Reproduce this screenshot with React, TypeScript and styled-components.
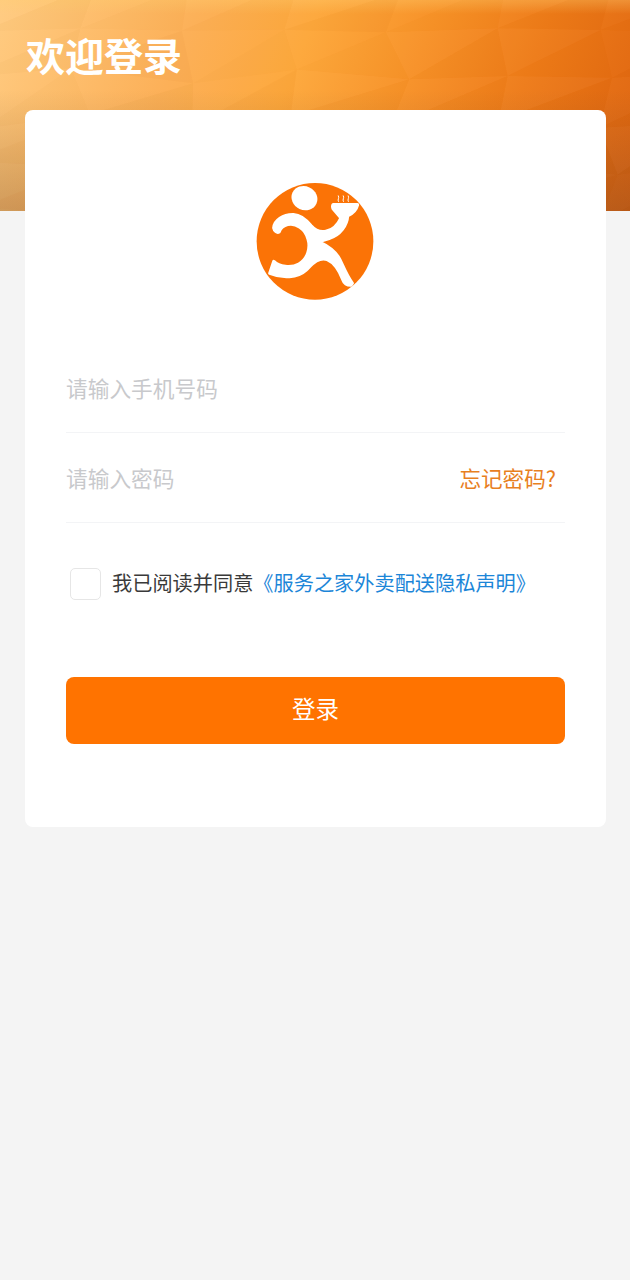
import React from 'react'
import styled, { createGlobalStyle } from 'styled-components'

const GlobalStyle = createGlobalStyle`
  html, body {
    margin: 0;
    padding: 0;
    background: #f4f4f4;
    font-family: "Noto Sans CJK SC", "Noto Sans", sans-serif;
  }
  * {
    box-sizing: border-box;
  }
`

const Page = styled.div`
  width: 630px;
  min-height: 1280px;
  background: #f4f4f4;
`

const Header = styled.header`
  position: relative;
  height: 211px;
  padding: 28px 26px 0;
  overflow: hidden;
  background:
    linear-gradient(180deg, rgba(255, 205, 110, 0.35) 0, rgba(255, 200, 110, 0) 14px),
    linear-gradient(180deg, rgba(130, 80, 40, 0) 90px, rgba(110, 70, 40, 0.32) 211px),
    linear-gradient(112deg, #ffcb80 0%, #fcb057 28%, #fda83c 45%, #f79127 62%, #ee7b18 78%, #dd620e 100%);
`

const Texture = styled.svg`
  position: absolute;
  inset: 0;
`

const Title = styled.h1`
  position: relative;
  margin: 0;
  font-size: 39px;
  line-height: 52px;
  font-weight: 700;
  color: #fff;
`

const Card = styled.main`
  position: relative;
  margin: -101px 24px 0 25px;
  height: 717px;
  padding: 71px 41px 0;
  background: #fff;
  border-radius: 8px;
`

const LogoWrap = styled.div`
  display: flex;
  justify-content: center;
  margin-bottom: 42px;
  padding-right: 1px;
`

const Field = styled.div`
  display: flex;
  align-items: center;
  justify-content: space-between;
  height: 90px;
  padding: 0 9px 1px 0;
  border-bottom: 1px solid #f3f4f6;
`

const Placeholder = styled.span`
  font-size: 21.7px;
  color: #c8c9cc;
`

const Forgot = styled.span`
  font-size: 21.6px;
  color: #e8801f;
`

const Agreement = styled.div`
  display: flex;
  align-items: center;
  margin: 45px 0 0 4px;
  height: 32px;
`

const Checkbox = styled.span`
  width: 31px;
  height: 32px;
  margin-right: 11px;
  border: 1.5px solid #e6e6e6;
  border-radius: 5px;
  background: #fff;
`

const AgreeText = styled.span`
  padding-bottom: 3px;
  font-size: 20.2px;
  color: #3a3a3a;
  white-space: nowrap;
`

const AgreeLink = styled(AgreeText)`
  color: #1c86d8;
`

const LoginButton = styled.button`
  display: block;
  width: 100%;
  height: 67px;
  margin-top: 77px;
  padding: 0 0 6px;
  border: 0;
  border-radius: 8px;
  background: #ff7300;
  color: #fff;
  font-family: inherit;
  font-size: 23.5px;
`

// low-poly facets of the header: a jittered mesh split into triangles
const CELL_W = 104
const CELL_H = 46
const jitter = (a: number, b: number, range: number) =>
  ((Math.sin(a * 12.9898 + b * 78.233) * 43758.5453) % 1) * range
const vertex = (col: number, row: number) =>
  `${col * CELL_W - 20 + jitter(col, row, 14)} ${row * CELL_H - 16 + jitter(row, col + 5, 8)}`

const facets: { d: string; fill: string; opacity: number }[] = []
for (let row = 0; row < 6; row++) {
  for (let col = 0; col < 8; col++) {
    const tl = vertex(col, row)
    const tr = vertex(col + 1, row)
    const bl = vertex(col, row + 1)
    const br = vertex(col + 1, row + 1)
    facets.push({
      d: `M${bl}L${tr}L${tl}Z`,
      fill: '#fff',
      opacity: 0.008 + Math.abs(jitter(col, row + 9, 0.02)),
    })
    facets.push({
      d: `M${bl}L${tr}L${br}Z`,
      fill: '#7a3a00',
      opacity: 0.008 + Math.abs(jitter(col + 3, row, 0.02)),
    })
  }
}

const RunnerLogo = () => (
  <svg width="120" height="120" viewBox="73 30 364 364">
    <circle cx="255" cy="213" r="177" fill="#fb7306" />
    <ellipse cx="223" cy="82" rx="40" ry="36" transform="rotate(25 223 82)" fill="#fff" />
    <path
      fill="#fff"
      stroke="#fff"
      strokeWidth="10"
      strokeLinejoin="round"
      d="M130 172C132 150 158 131 190 132C214 133 230 150 243 166C255 180 272 186 288 183C306 180 324 164 334 142L310 114C308 108 308 104 310 102L384 102C380 118 370 128 354 135C352 164 332 194 298 204L266 214C292 226 316 240 330 268C340 288 350 316 368 340L364 346C352 346 344 342 340 330C330 304 316 278 292 268C266 260 248 280 228 300C202 324 156 326 118 310L130 274C146 290 182 296 206 282C234 266 242 232 234 206C226 174 196 156 172 162C156 166 150 174 146 184C140 188 132 182 130 172Z"
    />
    <g stroke="#fff" strokeWidth="3" fill="none" strokeLinecap="round">
      <path d="M326 92C322 86 330 82 326 75" />
      <path d="M341 92C337 86 345 82 341 75" />
      <path d="M356 92C352 86 360 82 356 75" />
    </g>
  </svg>
)

export default function App() {
  return (
    <Page>
      <GlobalStyle />
      <Header>
        <Texture width="630" height="211" viewBox="0 0 630 211">
          {facets.map((f) => (
            <path key={f.d} d={f.d} fill={f.fill} opacity={f.opacity} />
          ))}
        </Texture>
        <Title>欢迎登录</Title>
      </Header>
      <Card>
        <LogoWrap>
          <RunnerLogo />
        </LogoWrap>
        <Field>
          <Placeholder>请输入手机号码</Placeholder>
        </Field>
        <Field>
          <Placeholder>请输入密码</Placeholder>
          <Forgot>忘记密码?</Forgot>
        </Field>
        <Agreement>
          <Checkbox />
          <AgreeText>我已阅读并同意</AgreeText>
          <AgreeLink>《服务之家外卖配送隐私声明》</AgreeLink>
        </Agreement>
        <LoginButton>登录</LoginButton>
      </Card>
    </Page>
  )
}
